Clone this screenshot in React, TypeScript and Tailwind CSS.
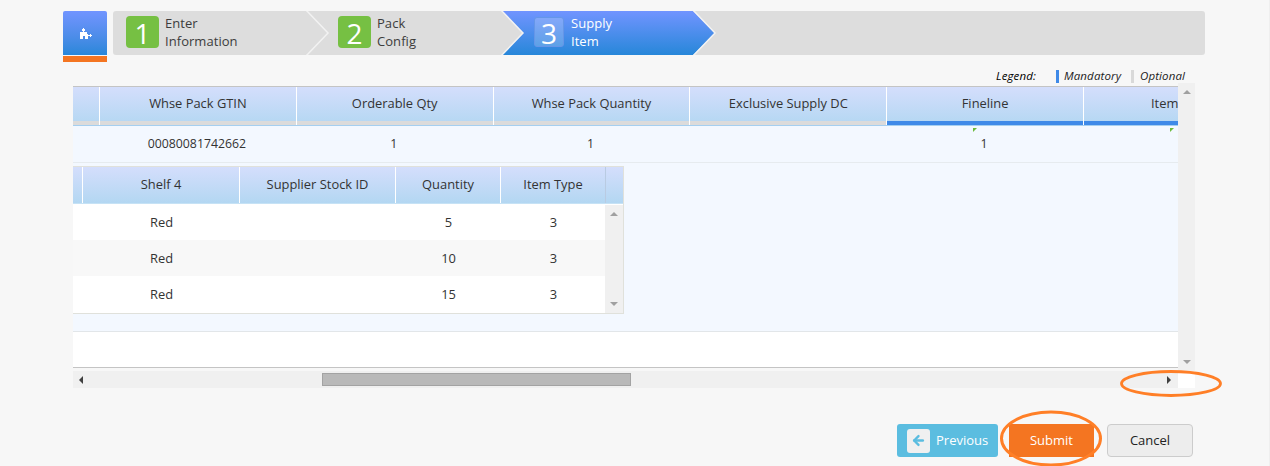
import React from 'react';
import { ArrowLeft } from 'lucide-react';

const columns = [
  { label: 'Whse Pack GTIN', value: '00080081742662', mandatory: false },
  { label: 'Orderable Qty', value: '1', mandatory: false },
  { label: 'Whse Pack Quantity', value: '1', mandatory: false },
  { label: 'Exclusive Supply DC', value: '', mandatory: false },
  { label: 'Fineline', value: '1', mandatory: true },
];

const shelfRows = [
  { shelf: 'Red', stock: '', quantity: '5', type: '3' },
  { shelf: 'Red', stock: '', quantity: '10', type: '3' },
  { shelf: 'Red', stock: '', quantity: '15', type: '3' },
];

const headGradient = 'bg-gradient-to-b from-[#d4defc] to-[#b3d7f2]';

function Arrow({ points, className }: { points: string; className: string }) {
  return (
    <svg className={className} viewBox="0 0 8 8" width="8" height="8">
      <polygon points={points} />
    </svg>
  );
}

function Step({ n, first, second, active }: { n: string; first: string; second: string; active?: boolean }) {
  return (
    <div className={`relative flex items-start ${active ? 'text-white' : 'text-[#3c3c3c]'}`}>
      <div
        className={
          active
            ? 'mt-[6px] ml-px flex h-[30px] w-[30px] items-center justify-center rounded-[3px] border border-[#6596e8] bg-white/20 text-[28px] font-medium leading-none'
            : 'mt-[5px] flex h-8 w-[33px] items-center justify-center rounded-[4px] bg-[#76c043] text-[28px] font-medium leading-none text-white'
        }
      >
        <span className="relative top-px">{n}</span>
      </div>
      <div className={`mt-[3px] text-[13px] leading-[18px] tracking-[0.05px] ${active ? 'ml-[7px]' : 'ml-[6px]'}`}>
        <div>{first}</div>
        <div>{second}</div>
      </div>
    </div>
  );
}

function Wizard() {
  return (
    <div className="flex h-[51px] pl-[63px]">
      <div className="flex w-[44px] flex-col">
        <div className="flex h-[44px] items-center justify-center rounded-t-[2px] bg-gradient-to-b from-[#7194ff] to-[#2787d9]">
          <svg width="14" height="12" viewBox="0 0 14 12" className="mt-[1px] ml-[2px]" fill="#fff">
            <path d="M1 4H4V3H3V1H4V0H5V1H6V3H5V4H8V6H9V7H11V6H12V7H13V8H12V9H11V8H9V11H6V8H4V11H1Z" />
          </svg>
        </div>
        <div className="mt-px h-[6px] bg-[#f47521]" />
      </div>
      <div className="relative ml-[6px] h-[44px] w-[1092px] overflow-hidden rounded-[3px] bg-[#dddddd]">
        <svg className="absolute inset-0" width="1092" height="44" viewBox="0 0 1092 44">
          <defs>
            <linearGradient id="activeStep" x1="0" y1="0" x2="0" y2="1">
              <stop offset="0" stopColor="#7194ff" />
              <stop offset="1" stopColor="#2787d9" />
            </linearGradient>
          </defs>
          <path d="M193 -1L215 22L193 45" fill="none" stroke="#f2f2f2" strokeWidth="1.5" />
          <path d="M389 0H580L602 22L580 44H389L410 22Z" fill="url(#activeStep)" />
          <path d="M388 -1L410 22L388 45" fill="none" stroke="#f2f2f2" strokeWidth="1.5" />
          <path d="M580 -1L602 22L580 45" fill="none" stroke="#f2f2f2" strokeWidth="1.5" />
        </svg>
        <div className="grid grid-cols-[212px_195px_1fr] pl-[13px]">
          <Step n="1" first="Enter" second="Information" />
          <Step n="2" first="Pack" second="Config" />
          <Step n="3" first="Supply" second="Item" active />
        </div>
      </div>
    </div>
  );
}

function Legend() {
  return (
    <div className="flex h-[14px] items-center pl-[996px] text-[11.5px] italic tracking-[0.12px] text-[#222]">
      <span className="w-[60px] font-medium text-black">Legend:</span>
      <span className="h-[13px] w-[3px] bg-[#3f8ae8]" />
      <span className="ml-[5px] w-[67px]">Mandatory</span>
      <span className="h-[13px] w-[3px] bg-[#d9d9d9]" />
      <span className="ml-[6px]">Optional</span>
    </div>
  );
}

function MainHeader() {
  return (
    <div className={`flex h-[39px] border-b border-[#a5cff0] ${headGradient}`}>
      <div className="flex w-[27px] shrink-0 flex-col justify-end border-r border-white">
        <div className="h-1 bg-[#dbdbdb]" />
      </div>
      {columns.map((c) => (
        <div key={c.label} className="flex w-[196.8px] shrink-0 flex-col border-r border-white">
          <div className="flex h-[34px] items-center justify-center">{c.label}</div>
          <div className={`h-1 ${c.mandatory ? 'bg-[#3f8ae8]' : 'bg-[#dbdbdb]'}`} />
        </div>
      ))}
      <div className="flex flex-1 flex-col">
        <div className="flex h-[34px] items-center pl-[67px]">Item</div>
        <div className="h-1 bg-[#3f8ae8]" />
      </div>
    </div>
  );
}

function EditMark() {
  return (
    <svg width="5" height="5" viewBox="0 0 5 5" className="absolute left-[86px] top-[2px]">
      <path d="M0 0H4L0 4Z" fill="#6cbb3c" />
    </svg>
  );
}

function MainRow() {
  return (
    <div className="flex h-[37px] border-b border-[#e6ebef] pl-[27px] text-[12.3px]">
      {columns.map((c) => (
        <div key={c.label} className="relative flex w-[196.8px] shrink-0 items-center justify-center pr-[3px]">
          {c.mandatory && <EditMark />}
          {c.value}
        </div>
      ))}
      <div className="relative flex-1">
        <EditMark />
      </div>
    </div>
  );
}

function ShelfTable() {
  return (
    <div className="mt-[3px] h-[148px] w-[551px] border-y border-r border-[#e0e1db] bg-white">
      <div className={`grid h-[37px] grid-cols-[10px_157px_156px_105px_105px_1fr] border-b border-[#c6e2f5] ${headGradient}`}>
        <div className="border-r border-white" />
        <div className="flex items-center justify-center border-r border-white">Shelf 4</div>
        <div className="flex items-center justify-center border-r border-white">Supplier Stock ID</div>
        <div className="flex items-center justify-center border-r border-white">Quantity</div>
        <div className="flex items-center justify-center border-r border-[#b9cbe2]">Item Type</div>
        <div />
      </div>
      <div className="flex h-[109px]">
        <div className="w-[532px]">
          {shelfRows.map((r, i) => (
            <div key={i} className={`grid h-[36px] grid-cols-[157px_156px_105px_105px] pt-px pl-[10px] ${i === 1 ? 'bg-[#f8f8f8]' : 'bg-white'}`}>
              <div className="flex items-center justify-center">{r.shelf}</div>
              <div>{r.stock}</div>
              <div className="flex items-center justify-center">{r.quantity}</div>
              <div className="flex items-center justify-center">{r.type}</div>
            </div>
          ))}
        </div>
        <div className="mt-px flex flex-1 flex-col items-center justify-between bg-[#f0f0f0] pt-[5px] pb-[5px]">
          <Arrow points="0,6 4,2 8,6" className="fill-[#a0a0a0]" />
          <Arrow points="0,2 8,2 4,6" className="fill-[#a0a0a0]" />
        </div>
      </div>
    </div>
  );
}

function Buttons() {
  return (
    <div className="mt-9 flex h-[33px] gap-[11px] pl-[897px] text-[13px]">
      <button className="flex w-[101px] items-center rounded-[3px] bg-[#5bbde0] pl-[10px] font-semibold text-white">
        <span className="mr-[6px] flex h-6 w-[23px] items-center justify-center rounded-[3px] bg-[#f0f0f0] text-[#5bbde0]">
          <ArrowLeft size={15} strokeWidth={3.8} />
        </span>
        <span className="font-medium">Previous</span>
      </button>
      <div className="relative w-[85px]">
        <button className="h-full w-full bg-[#f47521] text-white">Submit</button>
        <svg className="absolute -left-[10px] -top-[14px] max-w-none" width="106" height="58" viewBox="0 0 106 58">
          <ellipse cx="52" cy="28.5" rx="49.5" ry="26.5" fill="none" stroke="#ff7f27" strokeWidth="3" />
        </svg>
      </div>
      <button className="ml-[2px] w-[86px] rounded-[4px] border border-[#cccccc] bg-[#ededed] font-medium text-[#222]">Cancel</button>
    </div>
  );
}

export default function App() {
  return (
    <div className="h-[466px] w-[1270px] overflow-hidden border-r border-[#efefef] bg-[#f7f7f7] pt-[11px] font-['Open_Sans',sans-serif] text-[12.9px] text-[#333]">
      <Wizard />
      <div className="pt-[7px]">
        <Legend />
      </div>
      <div className="flex h-[288px] pl-[73px]">
        <div className="mt-[3px] flex h-[282px] w-[1105px] flex-col overflow-hidden border-t border-b border-[#c4c4c4] bg-white">
          <MainHeader />
          <div className="h-[206px] border-b border-[#e2e6e9] bg-[#f3f8ff]">
            <MainRow />
            <ShelfTable />
          </div>
        </div>
        <div className="flex w-[17px] flex-col items-center justify-between bg-[#f0f0f0] py-[5px]">
          <Arrow points="0,6 4,2 8,6" className="fill-[#a0a0a0]" />
          <Arrow points="0,2 8,2 4,6" className="fill-[#a0a0a0]" />
        </div>
      </div>
      <div className="relative flex h-[17px] pl-[73px]">
        <div className="flex w-[1105px] items-center bg-[#f0f0f0] pr-[5px] pl-[4px]">
          <Arrow points="6,0 2,4 6,8" className="fill-[#404040]" />
          <div className="ml-[237px] h-[13px] w-[309px] border border-[#a3a3a3] bg-[#b9b9b9]" />
          <Arrow points="2,0 6,4 2,8" className="ml-auto fill-[#404040]" />
        </div>
        <div className="w-[17px] bg-white" />
        <svg className="absolute left-[1119px] -top-[3px]" width="104" height="30" viewBox="0 0 104 30">
          <ellipse cx="52" cy="15.5" rx="49.5" ry="12" fill="none" stroke="#ff7f27" strokeWidth="2.8" />
        </svg>
      </div>
      <Buttons />
    </div>
  );
}
